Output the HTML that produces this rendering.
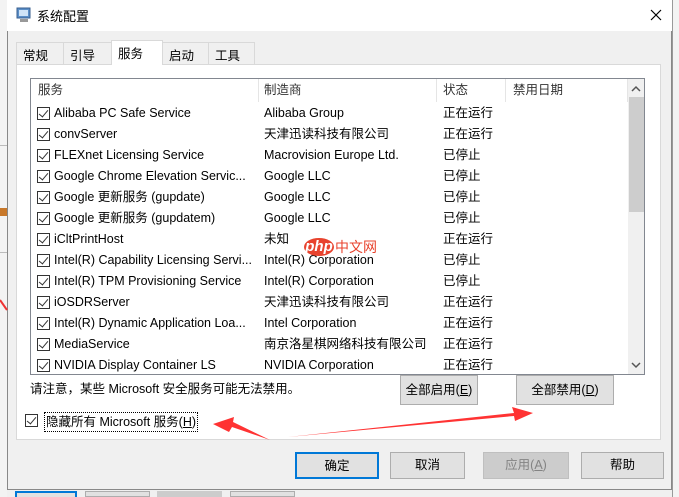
<!DOCTYPE html>
<html><head><meta charset="utf-8"><style>
*{margin:0;padding:0;box-sizing:border-box}
body{width:679px;height:497px;position:relative;overflow:hidden;background:#f0f0f0;font-family:"Liberation Sans","Noto Sans CJK SC",sans-serif;font-size:12.5px;color:#000}
.a{position:absolute}
.win{left:7px;top:0;width:665px;height:490px;background:#f0f0f0;border:1px solid #888;border-top:none}
.title{left:7px;top:0;width:665px;height:31px;background:#fff}
.tab{height:22px;border:1px solid #d9d9d9;border-bottom:none;background:#f0f0f0;padding:2px 0 0 6px;font-size:12.5px}
.panel{left:16px;top:64px;width:645px;height:376px;background:#fff;border:1px solid #d9d9d9}
.list{left:30px;top:78px;width:615px;height:297px;background:#fff;border:1px solid #828790;overflow:hidden}
.row{position:absolute;left:0;height:21px;width:598px;line-height:21px;white-space:nowrap}
.cb{position:absolute;left:6px;top:4px;width:13px;height:13px;border:1px solid #333;background:#fff}
.cb:after{content:"";position:absolute;left:3px;top:0px;width:4px;height:8px;border:solid #333;border-width:0 1.5px 1.5px 0;transform:rotate(40deg)}
.btn{background:#e1e1e1;border:1px solid #adadad;text-align:center;font-size:12.5px}
</style></head><body>
<div class="a" style="left:0;top:0;width:7px;height:497px;background:#f3f3f3"></div>
<div class="a" style="left:0;top:145px;width:7px;height:1px;background:#bbb"></div>
<div class="a" style="left:0;top:210px;width:7px;height:1px;background:#bbb"></div>
<div class="a" style="left:0;top:252px;width:7px;height:1px;background:#bbb"></div>
<div class="a" style="left:0;top:208px;width:7px;height:8px;background:#c8782a"></div>
<div class="a" style="left:672px;top:0;width:7px;height:497px;background:#f3f3f3;border-left:1px solid #999"></div>
<div class="a win"></div>
<div class="a title"></div>
<svg class="a" style="left:16px;top:7px" width="16" height="16"><rect x="1" y="1" width="13" height="10" fill="#5b8fc8" stroke="#3a5f8f"/><rect x="3" y="3" width="9" height="6" fill="#cfe3f7"/><rect x="4" y="12" width="8" height="3" fill="#999"/></svg>
<div class="a" style="left:37px;top:6px;font-size:13px">系统配置</div>
<svg class="a" style="left:650px;top:9px" width="12" height="12"><path d="M1 1L11 11M11 1L1 11" stroke="#000" stroke-width="1.2"/></svg>
<div class="a panel"></div>
<div class="a tab" style="left:16px;top:42px;width:48px">常规</div>
<div class="a tab" style="left:63px;top:42px;width:49px">引导</div>
<div class="a tab" style="left:111px;top:40px;width:52px;height:25px;background:#fff;padding-top:2px">服务</div>
<div class="a tab" style="left:162px;top:42px;width:47px">启动</div>
<div class="a tab" style="left:208px;top:42px;width:47px">工具</div>
<div class="a list">
<div class="a" style="left:0;top:0;width:598px;height:23px;color:#333;line-height:22px">
<span class="a" style="left:7px">服务</span>
<span class="a" style="left:227px;top:0;width:1px;height:23px;background:#e5e5e5"></span>
<span class="a" style="left:233px">制造商</span>
<span class="a" style="left:405px;top:0;width:1px;height:23px;background:#e5e5e5"></span>
<span class="a" style="left:412px">状态</span>
<span class="a" style="left:474px;top:0;width:1px;height:23px;background:#e5e5e5"></span>
<span class="a" style="left:482px">禁用日期</span>
<span class="a" style="left:596px;top:0;width:1px;height:23px;background:#e5e5e5"></span>
</div>
<div class="a" style="left:597px;top:0;width:17px;height:295px;background:#f0f0f0"></div>
<div class="a" style="left:598px;top:18px;width:15px;height:115px;background:#cdcdcd"></div>
<svg class="a" style="left:600px;top:6px" width="10" height="8"><path d="M1 6L5 2L9 6" stroke="#555" stroke-width="1.5" fill="none"/></svg>
<svg class="a" style="left:600px;top:282px" width="10" height="8"><path d="M1 2L5 6L9 2" stroke="#555" stroke-width="1.5" fill="none"/></svg>
<div class="row" style="top:24px"><i class="cb"></i><span class="a" style="left:23px">Alibaba PC Safe Service</span><span class="a" style="left:233px">Alibaba Group</span><span class="a" style="left:412px">正在运行</span></div>
<div class="row" style="top:45px"><i class="cb"></i><span class="a" style="left:23px">convServer</span><span class="a" style="left:233px">天津迅读科技有限公司</span><span class="a" style="left:412px">正在运行</span></div>
<div class="row" style="top:66px"><i class="cb"></i><span class="a" style="left:23px">FLEXnet Licensing Service</span><span class="a" style="left:233px">Macrovision Europe Ltd.</span><span class="a" style="left:412px">已停止</span></div>
<div class="row" style="top:87px"><i class="cb"></i><span class="a" style="left:23px">Google Chrome Elevation Servic...</span><span class="a" style="left:233px">Google LLC</span><span class="a" style="left:412px">已停止</span></div>
<div class="row" style="top:108px"><i class="cb"></i><span class="a" style="left:23px">Google 更新服务 (gupdate)</span><span class="a" style="left:233px">Google LLC</span><span class="a" style="left:412px">已停止</span></div>
<div class="row" style="top:129px"><i class="cb"></i><span class="a" style="left:23px">Google 更新服务 (gupdatem)</span><span class="a" style="left:233px">Google LLC</span><span class="a" style="left:412px">已停止</span></div>
<div class="row" style="top:150px"><i class="cb"></i><span class="a" style="left:23px">iCltPrintHost</span><span class="a" style="left:233px">未知</span><span class="a" style="left:412px">正在运行</span></div>
<div class="row" style="top:171px"><i class="cb"></i><span class="a" style="left:23px">Intel(R) Capability Licensing Servi...</span><span class="a" style="left:233px">Intel(R) Corporation</span><span class="a" style="left:412px">已停止</span></div>
<div class="row" style="top:192px"><i class="cb"></i><span class="a" style="left:23px">Intel(R) TPM Provisioning Service</span><span class="a" style="left:233px">Intel(R) Corporation</span><span class="a" style="left:412px">已停止</span></div>
<div class="row" style="top:213px"><i class="cb"></i><span class="a" style="left:23px">iOSDRServer</span><span class="a" style="left:233px">天津迅读科技有限公司</span><span class="a" style="left:412px">正在运行</span></div>
<div class="row" style="top:234px"><i class="cb"></i><span class="a" style="left:23px">Intel(R) Dynamic Application Loa...</span><span class="a" style="left:233px">Intel Corporation</span><span class="a" style="left:412px">正在运行</span></div>
<div class="row" style="top:255px"><i class="cb"></i><span class="a" style="left:23px">MediaService</span><span class="a" style="left:233px">南京洛星棋网络科技有限公司</span><span class="a" style="left:412px">正在运行</span></div>
<div class="row" style="top:276px"><i class="cb"></i><span class="a" style="left:23px">NVIDIA Display Container LS</span><span class="a" style="left:233px">NVIDIA Corporation</span><span class="a" style="left:412px">正在运行</span></div>
</div>
<div class="a" style="left:304px;top:238px;font:bold 15px 'Liberation Sans',sans-serif;color:#fff;background:#e8432e;border-radius:50%;width:30px;height:18px;line-height:17px;text-align:center;font-style:italic">php</div>
<div class="a" style="left:335px;top:237px;font-size:14px;color:#e8432e">中文网</div>
<div class="a" style="left:30px;top:378px">请注意，某些 Microsoft 安全服务可能无法禁用。</div>
<div class="a btn" style="left:400px;top:375px;width:78px;height:30px;line-height:28px">全部启用(<u>E</u>)</div>
<div class="a btn" style="left:516px;top:375px;width:98px;height:30px;line-height:28px">全部禁用(<u>D</u>)</div>
<i class="cb a" style="left:25px;top:414px"></i>
<div class="a" style="left:44px;top:412px;border:1px dotted #000;padding:1px 1px;line-height:16px">隐藏所有 Microsoft 服务(<u>H</u>)</div>
<svg class="a" style="left:0;top:0" width="679" height="497"><path d="M213 424L234 417L233 422L270 440L232 427L229 432Z" fill="#f33"/><path d="M288 437L514 413L512 407L533 413L515 421L514 416Z" fill="#f33"/><path d="M0 300L7 310" stroke="#e33" stroke-width="2"/></svg>
<div class="a btn" style="left:295px;top:452px;width:84px;height:27px;line-height:25px;border:2px solid #0078d7">确定</div>
<div class="a btn" style="left:390px;top:452px;width:75px;height:27px;line-height:25px">取消</div>
<div class="a btn" style="left:483px;top:452px;width:86px;height:27px;line-height:25px;background:#ccc;border-color:#bfbfbf;color:#838383">应用(<u>A</u>)</div>
<div class="a btn" style="left:581px;top:452px;width:83px;height:27px;line-height:25px">帮助</div>
<div class="a" style="left:15px;top:491px;width:62px;height:6px;border:2px solid #0078d7;border-bottom:none;background:#e1e1e1"></div>
<div class="a" style="left:85px;top:491px;width:65px;height:6px;background:#e1e1e1;border:1px solid #adadad"></div>
<div class="a" style="left:157px;top:491px;width:65px;height:6px;background:#ccc"></div>
<div class="a" style="left:230px;top:491px;width:65px;height:6px;background:#e1e1e1;border:1px solid #adadad"></div>
</body></html>
